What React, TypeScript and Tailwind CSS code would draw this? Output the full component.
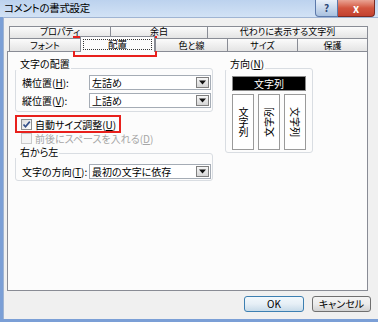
import React from "react";

const jp = "font-['Noto_Sans_CJK_JP',sans-serif] [font-feature-settings:'palt']";

function U({ children }: { children: React.ReactNode }) {
  return <span className="underline underline-offset-[1px]">{children}</span>;
}

function Combo({ value }: { value: string }) {
  return (
    <div className="flex h-[15px] w-[122px] border border-[#a5acb5] bg-white">
      <div className="flex-1 pl-[2px] leading-[13px]">{value}</div>
      <div className="m-px flex w-[13px] items-center justify-center border border-[#7f7f7f] bg-gradient-to-b from-[#f6f6f6] to-[#d6d6d6]">
        <svg width="7" height="5" viewBox="0 0 7 5">
          <path d="M0 0.5h7L3.5 4.5z" fill="#111" />
        </svg>
      </div>
    </div>
  );
}

function Check({ checked, disabled }: { checked?: boolean; disabled?: boolean }) {
  return (
    <div
      className={`flex h-[11px] w-[11px] items-center justify-center border ${
        disabled
          ? "border-[#cacaca] bg-[#f5f5f5]"
          : "border-[#8e8f8f] bg-gradient-to-br from-[#dcdcdc] to-white"
      }`}
    >
      {checked && (
        <svg width="9" height="9" viewBox="0 0 9 9">
          <path d="M1.5 4.5l2 2.2L7.8 1.6" fill="none" stroke="#34508a" strokeWidth="1.7" />
        </svg>
      )}
    </div>
  );
}

// row: "top" tabs sit in the back row, "bottom" in the front row
function Tab({ label, w, last, top }: { label: string; w: string; last?: boolean; top?: boolean }) {
  return (
    <div
      className={`${w} flex h-full items-center justify-center border-t border-l border-[#898c95] bg-gradient-to-b from-[#fbfbfb] to-[#e4e4e4] text-[9px] leading-none ${
        last ? "border-r" : ""
      } ${top ? "pb-[2px]" : "pt-[1px]"}`}
    >
      {label}
    </div>
  );
}

function GroupLabel({ children }: { children: React.ReactNode }) {
  return (
    <div className="relative z-10 self-start bg-[#fcfcfc] pl-[5px] pr-[1px] leading-[12px]">
      {children}
    </div>
  );
}

export default function App() {
  return (
    <div className={`relative flex h-[322px] w-[378px] flex-col overflow-hidden bg-[#7b9fd6] text-[10px] text-black ${jp}`}>
      {/* title bar */}
      <div className="flex h-[17px] items-start bg-gradient-to-b from-[#bcd2ee] to-[#d2e2f5]">
        <div className="pl-[4px] text-[10.5px] leading-[16px] tracking-[-0.3px]">コメントの書式設定</div>
        <div className="ml-auto mr-[3px] flex h-[17px]">
          <div className="flex w-[23px] items-center justify-center rounded-bl-[4px] border border-t-0 border-[#5c79aa] bg-gradient-to-b from-[#e9f0f9] to-[#a9c1df] text-[10px] font-bold leading-none text-[#2b4675]">
            ?
          </div>
          <div className="flex w-[37px] items-center justify-center rounded-br-[4px] border border-l-0 border-t-0 border-[#7a2a22] bg-gradient-to-b from-[#e9a394] via-[#d2553f] to-[#c3402e] text-[11px] font-bold leading-none text-white">
            x
          </div>
        </div>
      </div>

      {/* client area */}
      <div className="ml-[3px] flex h-[302px] flex-col border-l border-t border-[#9fb4d3] bg-[#f0f0f0]">
        {/* tabs */}
        <div className="ml-[5px] mt-[8px] flex w-[359px] flex-col">
          <div className="flex h-[12px]">
            <Tab label="プロパティ" w="w-[101px]" top />
            <Tab label="余白" w="w-[97px]" top />
            <Tab label="代わりに表示する文字列" w="w-[161px]" last top />
          </div>
          <div className="relative z-10 flex h-[13px] items-end">
            <Tab label="フォント" w="w-[71px]" />
            <div className="-mb-px flex h-[16px] w-[75px] flex-col items-stretch border-l border-r border-t border-[#898c95] bg-[#fcfcfc] px-[2px] pt-[2px]">
              <div className="flex h-[11px] items-center justify-center border border-dotted border-[#333] text-[9.5px] leading-none">
                配置
              </div>
            </div>
            <Tab label="色と線" w="w-[72px]" />
            <Tab label="サイズ" w="w-[70px]" />
            <Tab label="保護" w="w-[71px]" last />
          </div>
        </div>

        {/* panel */}
        <div className="ml-[3px] flex h-[240px] w-[361px] gap-[12px] border border-[#898c95] bg-[#fcfcfc] pl-[7px] pt-[6px]">
          {/* left column */}
          <div className="flex w-[198px] flex-col">
            <GroupLabel>文字の配置</GroupLabel>
            <div className="-mt-[2px] flex h-[44px] flex-col gap-[3px] rounded-[3px] border border-[#d9dde2] pl-[6px] pt-[6px]">
              <div className="flex items-center">
                <div className="w-[67px] leading-[15px]">
                  横位置(<U>H</U>):
                </div>
                <Combo value="左詰め" />
              </div>
              <div className="flex items-center">
                <div className="w-[67px] leading-[15px]">
                  縦位置(<U>V</U>):
                </div>
                <Combo value="上詰め" />
              </div>
            </div>

            <div className="mt-[7px] flex h-[11px] items-center pl-[6px]">
              <Check checked />
              <div className="ml-[3px] leading-[11px]">
                自動サイズ調整(<U>U</U>)
              </div>
            </div>
            <div className="mt-[3px] flex h-[11px] items-center pl-[6px] text-[#a6a6a6]">
              <Check disabled />
              <div className="ml-[3px] leading-[11px]">
                前後にスペースを入れる(<U>D</U>)
              </div>
            </div>

            <div className="mt-[2px] flex flex-col">
              <GroupLabel>右から左</GroupLabel>
              <div className="-mt-[5px] flex h-[28px] items-start rounded-[3px] border border-[#d9dde2] pl-[6px] pt-[10px]">
                <div className="w-[67px] leading-[15px]">
                  文字の方向(<U>T</U>):
                </div>
                <Combo value="最初の文字に依存" />
              </div>
            </div>
          </div>

          {/* right column */}
          <div className="flex w-[88px] flex-col">
            <GroupLabel>
              方向(<U>N</U>)
            </GroupLabel>
            <div className="-mt-[2px] flex h-[85px] flex-col rounded-[3px] border border-[#d9dde2] pl-[6px] pt-[7px]">
              <div className="flex h-[15px] w-[74px] items-center justify-center border border-[#8a8a8a] bg-black leading-none text-white">
                文字列
              </div>
              <div className="mt-[3px] flex h-[56px] w-[74px] gap-[4px]">
                <div className="flex w-[22px] items-center justify-center border border-[#9a9a9a] bg-white">
                  <span className="leading-[10px] [text-orientation:upright] [writing-mode:vertical-rl]">文字列</span>
                </div>
                <div className="flex w-[22px] items-center justify-center border border-[#9a9a9a] bg-white">
                  <span className="-rotate-90 whitespace-nowrap leading-none">文字列</span>
                </div>
                <div className="flex w-[22px] items-center justify-center border border-[#9a9a9a] bg-white">
                  <span className="rotate-90 whitespace-nowrap leading-none">文字列</span>
                </div>
              </div>
            </div>
          </div>
        </div>

        {/* buttons */}
        <div className="mr-[7px] mt-[5px] flex justify-end gap-[8px]">
          <div className="flex h-[16px] w-[60px] items-center justify-center rounded-[3px] border border-[#3c7fb1] bg-gradient-to-b from-[#f2f8fc] via-[#e6eff6] to-[#c8dbe9] leading-none">
            OK
          </div>
          <div className="flex h-[16px] w-[59px] items-center justify-center rounded-[3px] border border-[#707070] bg-gradient-to-b from-[#f4f4f4] via-[#ebebeb] to-[#d2d2d2] leading-none">
            キャンセル
          </div>
        </div>
      </div>

      {/* red highlight annotations */}
      <div className="pointer-events-none absolute left-[73px] top-[36px] h-[21px] w-[84px] border-2 border-[#e8201c]" />
      <div className="pointer-events-none absolute left-[15px] top-[115px] h-[18px] w-[106px] border-2 border-[#e8201c]" />
    </div>
  );
}
